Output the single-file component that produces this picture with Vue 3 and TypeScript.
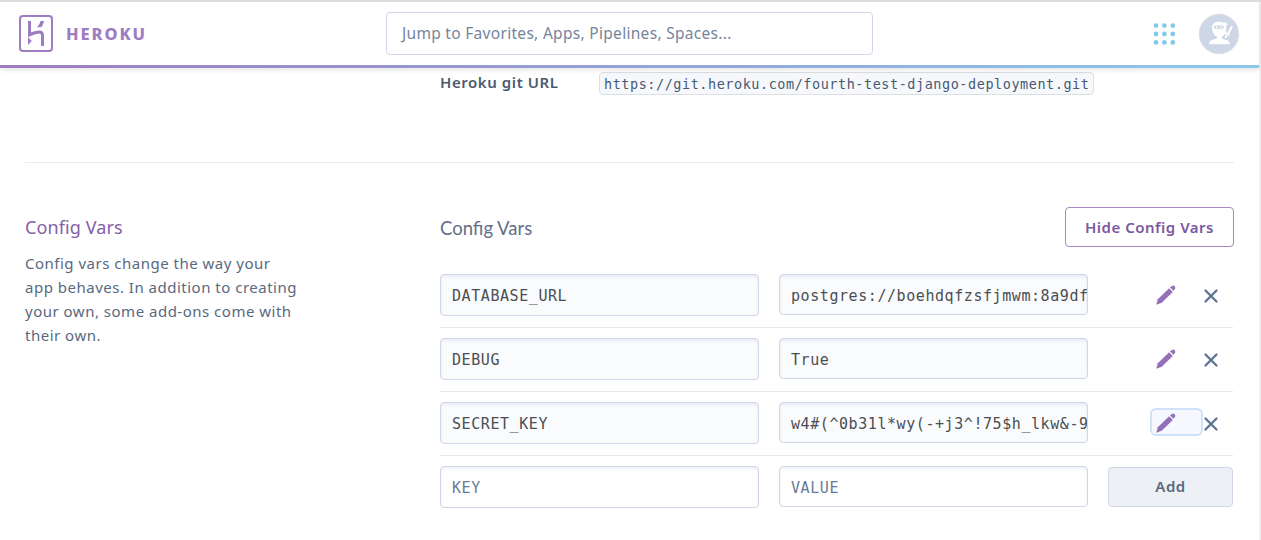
<script setup lang="ts">
interface ConfigVar {
  key: string
  value: string
  focused?: boolean
}

const configVars: ConfigVar[] = [
  { key: 'DATABASE_URL', value: 'postgres://boehdqfzsfjmwm:8a9df' },
  { key: 'DEBUG', value: 'True' },
  { key: 'SECRET_KEY', value: 'w4#(^0b31l*wy(-+j3^!75$h_lkw&-9', focused: true },
]

const dots: number[] = [4, 12.4, 20.8]
</script>

<template>
  <div class="page">
    <div class="viewport">
      <header class="topbar">
        <div class="brand">
          <svg class="logo" width="34" height="37" viewBox="0 0 34 37">
            <rect x="1" y="1" width="32" height="35" rx="3" fill="none" stroke="#9e7cc1" stroke-width="2" />
            <path d="M10.500 6v13.800c4-1.800 7.500-2.700 9.900-2.700 2.600 0 3.100 1.300 3.100 3.400V31" fill="none" stroke="#9e7cc1" stroke-width="3" />
            <path d="M21.500 6H25c-.4 2.400-1.400 4.500-3 6.300h-4c1.800-2 3-4 3.500-6.300zM9 22l3.800 4L9 30z" fill="#9e7cc1" />
          </svg>
          <span class="wordmark">HEROKU</span>
        </div>
        <div class="search">Jump to Favorites, Apps, Pipelines, Spaces...</div>
        <div class="account">
          <svg class="apps" width="24" height="24" viewBox="0 0 24 24" fill="#86c7ea">
            <template v-for="y in dots" :key="y">
              <circle v-for="x in dots" :key="x" :cx="x" :cy="y - 0.4" r="2.4" />
            </template>
          </svg>
          <svg class="avatar" width="42" height="42" viewBox="0 0 42 42">
            <circle cx="21" cy="21" r="19.700" fill="#cdd7e8" stroke="#dcdde2" stroke-width="1" />
            <path d="M14 14.500c0-3.800 3-5.700 7-5.700 1.900 0 3.500.4 4.700 1.200l3.200-1.200-.8 2 2.100.8-2.200 1c.4 1.200.4 3.200-.2 5.200-.7 2.600-2.300 5.400-4.200 6.400v1.600c3 1 8.200.8 8.200 5.500H11c0-4.700 4.800-4.500 8-5.700v-1.500c-3.200-1.800-5-5.700-5-9.600z" fill="#fff" />
            <rect x="15.800" y="12.400" width="10" height="3.400" rx="1.600" fill="#cdd7e8" />
            <circle cx="18.700" cy="14.100" r=".9" fill="#fff" />
            <circle cx="23" cy="14.100" r=".9" fill="#fff" />
            <path d="M34 13.300l-4.200 8.300M26.600 19.600l4.600 2.500M28.600 22.300l-1.300 2.600" fill="none" stroke="#fff" stroke-width="2" />
          </svg>
        </div>
      </header>

      <main class="content">
        <section class="git">
          <strong class="git-label">Heroku git URL</strong>
          <code class="git-url">https://git.heroku.com/fourth-test-django-deployment.git</code>
        </section>

        <section class="config">
          <aside class="about">
            <h2>Config Vars</h2>
            <p>Config vars change the way your<br />app behaves. In addition to creating<br />your own, some add-ons come with<br />their own.</p>
          </aside>
          <div class="vars">
            <div class="vars-head">
              <h3>Config Vars</h3>
              <button class="hide" type="button">Hide Config Vars</button>
            </div>
            <div v-for="item in configVars" :key="item.key" class="row">
              <div class="field key"><span>{{ item.key }}</span></div>
              <div class="field value"><span>{{ item.value }}</span></div>
              <div class="actions">
                <span class="edit" :class="{ focused: item.focused }">
                  <svg width="20" height="20" viewBox="0 0 20 20">
                    <path d="M.3 19.700l1.500-5.500L13.100 3.300l3.700 3.600L5.700 17.800z" fill="#9370b8" />
                    <path d="M14 2.500l1.500-1.300c1-.9 2.200-.9 3.100 0 .9.900.9 2.100.1 3l-1.200 1.500z" fill="#9370b8" />
                  </svg>
                </span>
                <svg class="remove" width="14" height="14" viewBox="0 0 14 14">
                  <path d="M1.500 1.500l11 11M12.500 1.500l-11 11" stroke="#5d7392" stroke-width="2.300" stroke-linecap="round" />
                </svg>
              </div>
            </div>
            <div class="row new">
              <div class="field key"><span>KEY</span></div>
              <div class="field value"><span>VALUE</span></div>
              <button class="add" type="button">Add</button>
            </div>
          </div>
        </section>
      </main>
    </div>
  </div>
</template>

<style>
body {
  margin: 0;
  overflow: hidden;
}
</style>

<style scoped>
* {
  box-sizing: border-box;
}
.page {
  height: 540px;
  border-top: 2px solid #dcdce1;
  background: #f0f0f1;
  padding-right: 2px;
  font-family: "Noto Sans", "Open Sans", sans-serif;
  color: #596981;
  overflow: hidden;
}
.viewport {
  height: 538px;
  background: #fff;
}
.topbar {
  position: relative;
  height: 66px;
  padding: 0 19px;
  display: flex;
  align-items: center;
  border-bottom: 3px solid;
  border-image: linear-gradient(90deg, #9e7cc1, #8bcaea) 1;
  box-shadow: 0 2px 5px rgba(0, 0, 0, 0.1);
}
.brand {
  width: 367px;
  display: flex;
  align-items: center;
}
.wordmark {
  margin-left: 13px;
  font: 800 16.5px/20px "Noto Sans", sans-serif;
  letter-spacing: 1.9px;
  color: #9e7cc1;
}
.search {
  width: 487px;
  height: 43px;
  padding-left: 15px;
  border: 1px solid #cfd7e9;
  border-radius: 4px;
  font-size: 15.5px;
  line-height: 41px;
  letter-spacing: 0.3px;
  color: #76849c;
  white-space: nowrap;
}
.account {
  margin-left: auto;
  display: flex;
  align-items: center;
}
.apps {
  margin-right: 22px;
}
.content {
  padding: 0 25px;
}
.git {
  height: 95px;
  padding: 4px 0 0 415px;
  display: flex;
  align-items: flex-start;
  border-bottom: 1px solid #e7eaf2;
}
.git-label {
  width: 159px;
  font-size: 15px;
  line-height: 20px;
  font-weight: 600;
  letter-spacing: 0.57px;
  color: #4a5a70;
}
.git-url {
  height: 23px;
  width: 495px;
  padding-left: 4px;
  border: 1px solid #dcdfe4;
  border-radius: 4px;
  background: #f7f8fc;
  font: 13.5px/22px "DejaVu Sans Mono", monospace;
  letter-spacing: 0.54px;
  color: #465a73;
  white-space: nowrap;
}
.config {
  display: flex;
  padding-top: 44px;
}
.about {
  width: 415px;
}
h2,
h3 {
  margin: 0;
  font-weight: 400;
  font-size: 18px;
}
h2 {
  padding-top: 8px;
  line-height: 24px;
  letter-spacing: 0.1px;
  color: #8560a8;
}
p {
  margin: 12px 0 0;
  font-size: 15px;
  line-height: 24px;
  letter-spacing: 0.5px;
  color: #596981;
  white-space: nowrap;
}
.vars {
  width: 794px;
}
.vars-head {
  height: 57px;
  display: flex;
  justify-content: space-between;
  align-items: flex-start;
}
h3 {
  padding-top: 8px;
  font: 400 18.5px/26px Lato, sans-serif;
  color: #62708a;
}
.hide,
.add {
  margin: 0;
  padding: 0;
  height: 40px;
  border-radius: 4px;
  font: 600 15px/38px "Noto Sans", sans-serif;
  letter-spacing: 0.5px;
}
.hide {
  width: 169px;
  border: 1px solid #a489c1;
  background: #fff;
  color: #7b589f;
}
.row {
  width: 793px;
  height: 64px;
  padding-top: 10px;
  display: flex;
  align-items: flex-start;
  border-bottom: 1px solid #e5e8f1;
}
.field {
  border: 1px solid #cfd7e9;
  border-radius: 4px;
  background: #fafbfd;
  box-shadow: inset 0 2px 3px rgba(207, 215, 233, 0.4);
  padding-left: 11px;
  overflow: hidden;
  white-space: pre;
  font: 15px/42px "DejaVu Sans Mono", monospace;
  letter-spacing: 0.57px;
  color: #4b4e53;
}
.key {
  width: 319px;
  height: 42px;
  margin-right: 20px;
}
.value {
  width: 309px;
  height: 41px;
}
.actions {
  flex: 1;
  height: 42px;
  padding-left: 62px;
  display: flex;
  align-items: center;
}
.edit {
  width: 53px;
  height: 28px;
  margin: -2px 1px 0 0;
  padding: 5px 0 0 6px;
  border-radius: 6px;
}
.edit svg {
  display: block;
}
.edit.focused {
  border: 2px solid #cfe2f7;
  padding: 3px 0 0 4px;
  background: #f5f8fe;
}
.remove {
  margin-top: 2px;
}
.new {
  border-bottom: 0;
}
.new .field {
  background: #fff;
  color: #687a95;
}
.add {
  width: 125px;
  margin: 1px 0 0 20px;
  border: 1px solid #cfd7e9;
  background: #edf0f5;
  line-height: 36px;
  padding-bottom: 2px;
  color: #596981;
}
</style>
